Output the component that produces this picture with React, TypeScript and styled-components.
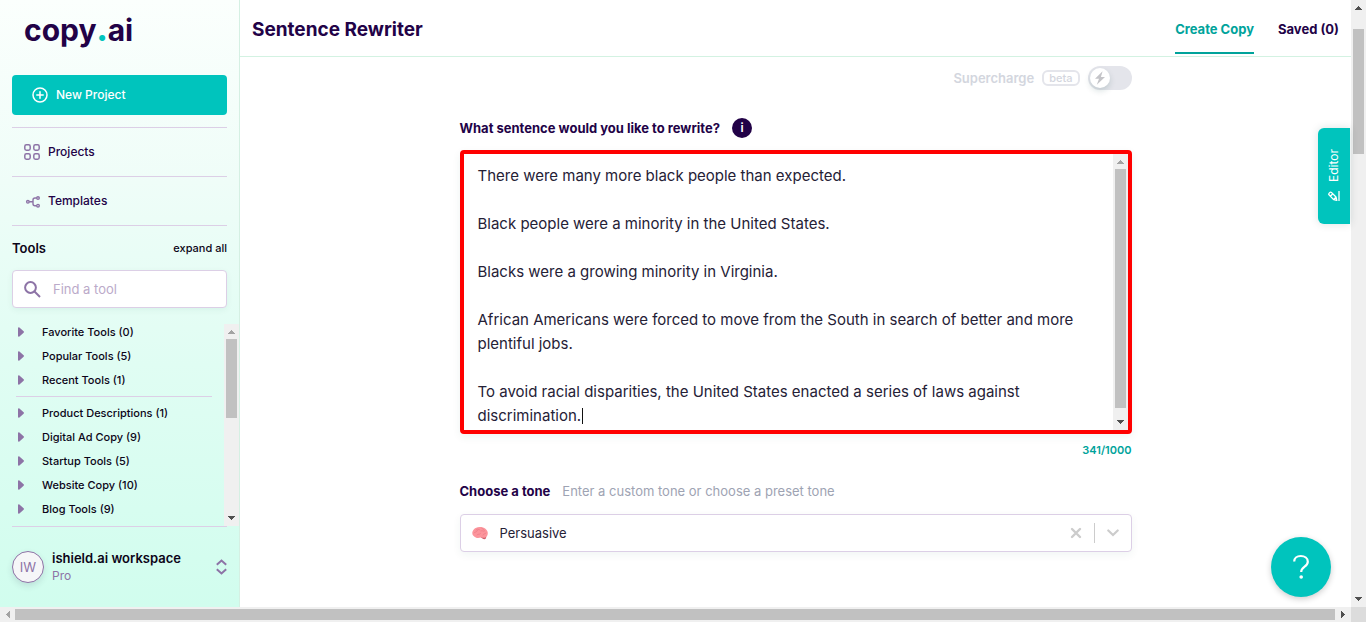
import React, { useState } from "react";
import styled, { createGlobalStyle, css } from "styled-components";

const ink = "#220247";
const teal = "#00c4bd";
const tealDark = "#00a39b";
const mauve = "#8d73a6";
const line = "#dccfe6";

const GlobalStyle = createGlobalStyle`
  *, *::before, *::after { box-sizing: border-box; }
  html, body, #root { height: 100%; }
  body { margin: 0; overflow: hidden; background: #fff; color: #0c0518; font-family: Inter, "Liberation Sans", sans-serif; font-size: 12px; line-height: 16px; }
  button, input, select, textarea { font: inherit; color: inherit; margin: 0; }
  button { padding: 0; border: 0; background: none; cursor: pointer; }
  a { color: inherit; text-decoration: none; }
  ul { list-style: none; margin: 0; padding: 0; }
  h1, h2, p { margin: 0; }
  svg { display: block; flex: none; }
`;

const Frame = styled.div`
  display: grid;
  grid-template-columns: minmax(0, 1fr) 15px;
  grid-template-rows: minmax(0, 1fr) 15px;
  height: 100vh;
`;

const Shell = styled.div`
  position: relative;
  display: flex;
  min-width: 0;
  min-height: 0;
`;

/* Scrollbars */

const Track = styled.div<{ $horizontal?: boolean }>`
  display: flex;
  flex: none;
  flex-direction: ${(p) => (p.$horizontal ? "row" : "column")};
  background: #f0f0f0;
  ${(p) => (p.$horizontal ? "height: 15px;" : "width: 15px;")}
`;

const ArrowBox = styled.span`
  display: grid;
  place-items: center;
  flex: none;
  width: 15px;
  height: 15px;
`;

const Space = styled.span<{ $grow: number }>`
  flex: ${(p) => p.$grow} 0 0;
`;

const Thumb = styled.span<{ $grow: number; $horizontal?: boolean }>`
  flex: ${(p) => p.$grow} 0 0;
  background: #c1c1c1;
  margin: ${(p) => (p.$horizontal ? "2px 0" : "0 2px")};
`;

const Corner = styled.div`
  background: #dcdcdc;
`;

type BarProps = { horizontal?: boolean; before: number; thumb: number; after: number; startOn?: boolean };

function Arrow({ turn, active }: { turn: number; active?: boolean }) {
  return (
    <ArrowBox>
      <svg width="7" height="7" viewBox="0 0 7 7" aria-hidden="true" fill={active ? "#505050" : "#a3a3a3"}>
        <path d="M3 2h1v1h1v1h1v1h1v1H0V5h1V4h1V3h1z" transform={`rotate(${turn} 3.5 3.5)`} />
      </svg>
    </ArrowBox>
  );
}

function ScrollBar({ horizontal, before, thumb, after, startOn }: BarProps) {
  return (
    <Track $horizontal={horizontal} aria-hidden="true">
      <Arrow turn={horizontal ? 270 : 0} active={startOn} />
      <Space $grow={before} />
      <Thumb $grow={thumb} $horizontal={horizontal} />
      <Space $grow={after} />
      <Arrow turn={horizontal ? 90 : 180} active />
    </Track>
  );
}

/* Sidebar */

const Sidebar = styled.aside`
  display: flex;
  flex-direction: column;
  flex: none;
  width: 240px;
  border-right: 1px solid #d5f0e3;
  background: linear-gradient(180deg, #fbfffd 0%, #effdf8 30%, #e0fdf3 60%, #d1fdee 100%);
`;

const Logo = styled.a`
  margin: 10px 24px 25px;
  color: ${ink};
  font-size: 30px;
  line-height: 40px;
  font-weight: 700;
  span { color: ${teal}; font-weight: 900; }
`;

const NewProject = styled.button`
  display: flex;
  align-items: center;
  gap: 8px;
  height: 40px;
  margin: 0 12px 12px;
  padding: 0 20px;
  border-radius: 4px;
  background: ${teal};
  color: #fff;
  font-weight: 500;
`;

const NavItem = styled.a`
  display: flex;
  align-items: center;
  gap: 8px;
  height: 49px;
  margin: 0 12px;
  padding: 0 12px;
  border-top: 1px solid ${line};
  color: ${ink};
  font-weight: 500;
`;

const ToolsHead = styled.div`
  display: flex;
  align-items: center;
  justify-content: space-between;
  height: 45px;
  margin: 0 12px;
  border-top: 1px solid ${line};
  h2 { font-size: 13px; font-weight: 600; }
  button { font-size: 11px; font-weight: 500; }
`;

const Search = styled.label`
  display: flex;
  align-items: center;
  gap: 12px;
  flex: none;
  height: 38px;
  margin: 0 12px;
  padding: 0 11px;
  border: 1px solid ${line};
  border-radius: 4px;
  background: #fff;
  box-shadow: 0 2px 6px rgba(0, 80, 60, 0.06);
  input {
    flex: 1;
    min-width: 0;
    padding: 0;
    border: 0;
    outline: 0;
    background: none;
    font-size: 13px;
    line-height: 20px;
  }
  input::placeholder { color: #bbaac9; opacity: 1; }
`;

const ToolArea = styled.div`
  display: flex;
  flex: 1;
  min-height: 0;
  padding-top: 12px;
`;

const ToolList = styled.ul`
  flex: 1;
  min-width: 0;
  overflow: hidden;
  padding: 0 12px;
`;

const BarSlot = styled.div`
  display: flex;
  padding-top: 4px;
`;

const ToolRow = styled.li<{ $ruled?: boolean }>`
  ${(p) => p.$ruled && css`
    margin: 4px 0 4px 4px;
    border-top: 1px solid ${line};
    height: 1px;
  `}
  button {
    display: flex;
    align-items: center;
    gap: 18px;
    width: 100%;
    height: 24px;
    padding: 0 6px;
    font-size: 11px;
    font-weight: 500;
  }
`;

const Workspace = styled.button`
  display: flex;
  align-items: center;
  gap: 8px;
  flex: none;
  height: 81px;
  margin: 0 12px;
  border-top: 1px solid ${line};
  text-align: left;
`;

const Avatar = styled.span`
  display: grid;
  place-items: center;
  width: 32px;
  height: 32px;
  border: 1px solid ${mauve};
  border-radius: 50%;
  background: #f6f6f8;
  color: ${mauve};
  font-size: 13px;
  box-shadow: 0 3px 6px rgba(60, 60, 90, 0.14);
`;

const WorkspaceName = styled.span`
  flex: 1;
  font-size: 13px;
  line-height: 18px;
  font-weight: 600;
  small {
    display: block;
    color: ${mauve};
    font-size: 12px;
    line-height: 18px;
    font-weight: 400;
  }
`;

/* Main area */

const Main = styled.main`
  flex: 1;
  min-width: 0;
  overflow: hidden;
`;

const Header = styled.header`
  display: flex;
  align-items: center;
  justify-content: space-between;
  height: 57px;
  padding: 4px 12px 0;
  border-bottom: 1px solid #d3f2e2;
  color: ${ink};
  h1 { font-size: 19px; line-height: 24px; font-weight: 700; }
`;

const Tabs = styled.nav`
  display: flex;
  align-self: flex-start;
  gap: 24px;
`;

const Tab = styled.a<{ $active?: boolean }>`
  padding: 15px 0 13px;
  border-bottom: 2px solid ${(p) => (p.$active ? tealDark : "transparent")};
  color: ${(p) => (p.$active ? tealDark : ink)};
  font-size: 13px;
  line-height: 20px;
  font-weight: 700;
`;

const Form = styled.form`
  display: flex;
  flex-direction: column;
  max-width: 672px;
  margin: 0 auto;
  padding-top: 9px;
`;

const Supercharge = styled.label`
  display: flex;
  align-items: center;
  align-self: flex-end;
  gap: 8px;
  color: #d3d6de;
  font-size: 13px;
  font-weight: 600;
`;

const Beta = styled.span`
  height: 16px;
  padding: 0 5px;
  border: 2px solid #e4e5eb;
  border-radius: 6px;
  font-size: 11px;
  line-height: 12px;
  font-weight: 500;
`;

const Switch = styled.span`
  position: relative;
  width: 44px;
  height: 24px;
  input {
    appearance: none;
    display: block;
    width: 44px;
    height: 24px;
    border-radius: 12px;
    background: #e4e5eb;
  }
`;

const Knob = styled.span`
  position: absolute;
  top: 2px;
  left: 2px;
  display: grid;
  place-items: center;
  width: 20px;
  height: 20px;
  border-radius: 50%;
  background: #fff;
  box-shadow: 0 3px 6px rgba(0, 60, 60, 0.16);
`;

const FieldHead = styled.div`
  display: flex;
  align-items: center;
  gap: 12px;
  height: 20px;
  color: ${ink};
  font-size: 13px;
  line-height: 20px;
  label { font-weight: 700; }
`;

const SentenceHead = styled(FieldHead)`
  margin: 28px 0 12px;
`;

const ToneHead = styled(FieldHead)`
  margin: 23px 0 13px;
`;

const Hint = styled.span`
  color: #9ea3b3;
`;

const Info = styled.button`
  width: 20px;
  height: 20px;
  border-radius: 50%;
  background: ${ink};
  color: #fff;
  font-size: 12px;
  line-height: 20px;
  font-weight: 600;
`;

const TextBox = styled.div`
  position: relative;
  display: flex;
  height: 284px;
  border: 4px solid #ff0000;
  border-radius: 4px;
  box-shadow: 0 3px 8px rgba(0, 80, 70, 0.07);
  textarea {
    flex: 1;
    min-width: 0;
    resize: none;
    padding: 10px 14px 0;
    border: 0;
    outline: 0;
    color: #252136;
    background: #fff;
    font-size: 15px;
    line-height: 24px;
    overflow: hidden;
  }
`;

const Caret = styled.i`
  position: absolute;
  left: 118px;
  bottom: 6px;
  width: 1px;
  height: 16px;
  background: #111;
`;

const Count = styled.output`
  align-self: flex-end;
  margin-top: 8px;
  color: ${tealDark};
  font-size: 11px;
  line-height: 16px;
  font-weight: 600;
`;

const ToneBox = styled.div`
  display: flex;
  align-items: center;
  height: 38px;
  padding: 0 12px 0 11px;
  border: 1px solid ${line};
  border-radius: 4px;
  background: #fff;
  box-shadow: 0 3px 8px rgba(0, 80, 70, 0.06);
  select {
    appearance: none;
    flex: 1;
    min-width: 0;
    padding: 0 12px;
    border: 0;
    outline: 0;
    background: none;
    color: #252136;
    font-size: 13px;
    line-height: 20px;
  }
`;

const Separator = styled.span`
  width: 1px;
  height: 20px;
  margin: 0 12px;
  background: #ccc;
`;

const EditorTab = styled.button`
  position: absolute;
  top: 128px;
  right: 1px;
  display: flex;
  align-items: center;
  justify-content: center;
  gap: 8px;
  width: 32px;
  height: 96px;
  writing-mode: vertical-rl;
  transform: rotate(180deg);
  border-radius: 0 6px 6px 0;
  background: ${teal};
  color: #fff;
  font-size: 12px;
  box-shadow: 0 0 8px rgba(0, 60, 60, 0.15);
`;

const Help = styled.button`
  position: absolute;
  right: 20px;
  bottom: 10px;
  display: grid;
  place-items: center;
  width: 60px;
  height: 60px;
  border-radius: 50%;
  background: ${teal};
  box-shadow: 0 2px 6px rgba(0, 0, 0, 0.2);
`;

const tools = [
  "Favorite Tools (0)",
  "Popular Tools (5)",
  "Recent Tools (1)",
  "",
  "Product Descriptions (1)",
  "Digital Ad Copy (9)",
  "Startup Tools (5)",
  "Website Copy (10)",
  "Blog Tools (9)",
];

const sentences = `There were many more black people than expected.

Black people were a minority in the United States.

Blacks were a growing minority in Virginia.

African Americans were forced to move from the South in search of better and more plentiful jobs.

To avoid racial disparities, the United States enacted a series of laws against discrimination.`;

function BrainIcon() {
  return (
    <svg width="16" height="16" viewBox="0 0 16 16" aria-hidden="true">
      <path d="M8.500 11.500c.8 1.600 2.500 3 5 2.600l1-2.600z" fill="#cf5f6c" />
      <path d="M.3 8.300C.3 5.300 2.500 2.200 7.500 1.900c4.500-.2 8.200 2.600 8.300 6 .1 2.300-1 4.100-3 4.800-1.200.4-2.500-.4-3.800-.1-1.800.4-3.700.9-5.200-.2C2 11.800.3 10.300.3 8.300z" fill="#fc959c" />
      <path d="M2 8c1-1.500 2.500-.5 3-2s2-2 3-1M5 10c1-1.500 2.500 0 3.500-1.500M9 6c1.500-1 2 .8 3.500 0M11 10c.5-1.500 2-.8 3-2M4 5c.5-.8 1.500-1 2-1M10 3.500c1 .3 1.500.7 2 1.500" fill="none" stroke="#ea7a85" strokeWidth=".7" strokeLinecap="round" />
    </svg>
  );
}

export default function App() {
  const [text, setText] = useState(sentences);
  const [on, setOn] = useState(false);

  return (
    <>
      <GlobalStyle />
      <Frame>
        <Shell>
          <Sidebar>
            <Logo href="#">copy<span>.</span>ai</Logo>
            <NewProject type="button">
              <svg width="16" height="16" viewBox="0 0 16 16" fill="none" stroke="#fff" strokeWidth="1.500" strokeLinecap="round" aria-hidden="true">
                <circle cx="8" cy="8" r="7" />
                <path d="M8 4.800v6.400M4.800 8h6.400" />
              </svg>
              New Project
            </NewProject>
            <NavItem href="#projects">
              <svg width="16" height="16" viewBox="0 0 16 16" fill="none" stroke={mauve} strokeWidth="1.500" aria-hidden="true">
                <rect x=".8" y=".8" width="5.400" height="5.400" rx="1.600" />
                <rect x="9.800" y=".8" width="5.400" height="5.400" rx="1.600" />
                <rect x=".8" y="9.800" width="5.400" height="5.400" rx="1.600" />
                <rect x="9.800" y="9.800" width="5.400" height="5.400" rx="1.600" />
              </svg>
              Projects
            </NavItem>
            <NavItem href="#templates">
              <svg width="16" height="16" viewBox="0 0 16 16" fill="none" stroke={mauve} strokeWidth="1.400" aria-hidden="true">
                <circle cx="3.900" cy="8.800" r="1.300" />
                <circle cx="14" cy="5" r="1.300" />
                <circle cx="14" cy="12.700" r="1.300" />
                <path d="M5.200 8.800H9M12.700 5h-1.700a2 2 0 0 0-2 2v3.700a2 2 0 0 0 2 2h1.700" />
              </svg>
              Templates
            </NavItem>
            <ToolsHead>
              <h2>Tools</h2>
              <button type="button">expand all</button>
            </ToolsHead>
            <Search>
              <svg width="17" height="17" viewBox="0 0 17 17" fill="none" stroke={mauve} strokeWidth="2" aria-hidden="true">
                <circle cx="6.500" cy="6.500" r="5.400" />
                <path d="M10.500 10.500l5.500 5.500" />
              </svg>
              <input type="text" placeholder="Find a tool" aria-label="Find a tool" />
            </Search>
            <ToolArea>
              <ToolList>
                {tools.map((name) =>
                  name ? (
                    <ToolRow key={name}>
                      <button type="button">
                        <svg width="6" height="10" viewBox="0 0 6 10" fill={mauve} aria-hidden="true">
                          <path d="M0 1.200C0 .3.800 0 1.400.6l4.200 3.700c.5.400.5 1 0 1.400L1.400 9.400C.8 10 0 9.700 0 8.800z" />
                        </svg>
                        {name}
                      </button>
                    </ToolRow>
                  ) : (
                    <ToolRow key="rule" $ruled role="separator" />
                  )
                )}
              </ToolList>
              <BarSlot>
                <ScrollBar before={0} thumb={79} after={93} />
              </BarSlot>
            </ToolArea>
            <Workspace type="button">
              <Avatar>IW</Avatar>
              <WorkspaceName>
                ishield.ai workspace
                <small>Pro</small>
              </WorkspaceName>
              <svg width="11" height="16" viewBox="0 0 11 16" fill="none" stroke={mauve} strokeWidth="2" aria-hidden="true">
                <path d="M.8 5.800l4.700-4.300 4.700 4.300M.8 10.200l4.700 4.300 4.700-4.300" />
              </svg>
            </Workspace>
          </Sidebar>

          <Main>
            <Header>
              <h1>Sentence Rewriter</h1>
              <Tabs>
                <Tab href="#create" $active>Create Copy</Tab>
                <Tab href="#saved">Saved (0)</Tab>
              </Tabs>
            </Header>
            <Form>
              <Supercharge>
                Supercharge
                <Beta>beta</Beta>
                <Switch>
                  <input type="checkbox" checked={on} onChange={() => setOn(!on)} />
                  <Knob>
                    <svg width="12" height="14" viewBox="0 0 12 14" fill="#c4c4c8" aria-hidden="true">
                      <path d="M8.600.3L1 7.800h4L2.800 13.700 11 5.900H6.900z" />
                    </svg>
                  </Knob>
                </Switch>
              </Supercharge>

              <SentenceHead>
                <label htmlFor="sentence">What sentence would you like to rewrite?</label>
                <Info type="button" aria-label="More information">i</Info>
              </SentenceHead>
              <TextBox>
                <textarea id="sentence" spellCheck={false} value={text} onChange={(e) => setText(e.target.value)} />
                <Caret />
                <ScrollBar before={0} thumb={239} after={7} />
              </TextBox>
              <Count htmlFor="sentence">341/1000</Count>

              <ToneHead>
                <label htmlFor="tone">Choose a tone</label>
                <Hint>Enter a custom tone or choose a preset tone</Hint>
              </ToneHead>
              <ToneBox>
                <BrainIcon />
                <select id="tone" defaultValue="Persuasive">
                  <option>Persuasive</option>
                </select>
                <button type="button" aria-label="Clear tone">
                  <svg width="12" height="12" viewBox="0 0 12 12" fill="none" stroke="#ccc" strokeWidth="2.400" strokeLinecap="round" aria-hidden="true">
                    <path d="M2 2l8 8M10 2l-8 8" />
                  </svg>
                </button>
                <Separator />
                <svg width="12" height="8" viewBox="0 0 12 8" fill="none" stroke="#ccc" strokeWidth="2.200" strokeLinecap="round" aria-hidden="true">
                  <path d="M1.300 1.500L6 6l4.700-4.500" />
                </svg>
              </ToneBox>
            </Form>
          </Main>

          <EditorTab type="button">
            <svg width="12" height="12" viewBox="0 0 12 12" fill="none" stroke="#fff" strokeWidth="1.300" strokeLinejoin="round" aria-hidden="true">
              <path d="M1 1v10M3.200 1.600L4 5l4.600 4.600c1 1 3.400-1.400 2.400-2.400L6.400 2.400zM4 5l2.400-2.600M7.200 8.200l2.500-2.500" />
            </svg>
            Editor
          </EditorTab>
          <Help type="button" aria-label="Help">
            <svg width="18" height="26" viewBox="0 0 18 26" fill="none" aria-hidden="true">
              <path d="M2.200 7.500C2.200 4.200 4.800 2 8.800 2s7 2.200 7 5.700c0 5.200-6.600 4.600-6.600 10.300" stroke="#fff" strokeWidth="2.200" />
              <circle cx="9.200" cy="23" r="1.800" fill="#fff" />
            </svg>
          </Help>
        </Shell>
        <ScrollBar before={14} thumb={125} after={438} startOn />
        <ScrollBar horizontal before={0} thumb={1320} after={1} />
        <Corner />
      </Frame>
    </>
  );
}
